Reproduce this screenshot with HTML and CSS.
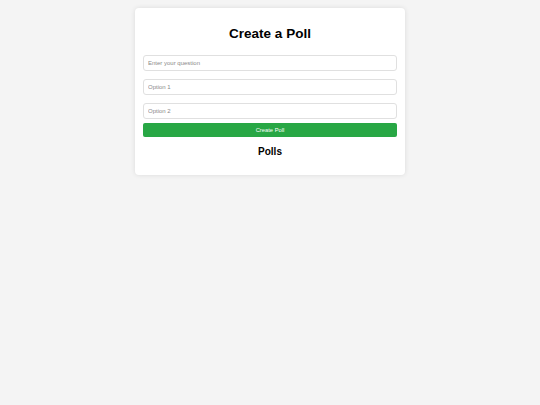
FILE: index.html
```html
<!DOCTYPE html>
<html lang="en">
<head>
<meta charset="utf-8">
<title>Create a Poll</title>
<link rel="stylesheet" href="styles.css">
</head>
<body>
<div class="container">
  <h1 class="title">Create a Poll</h1>
  <form class="poll-form">
    <input class="field" type="text" placeholder="Enter your question">
    <input class="field" type="text" placeholder="Option 1">
    <input class="field field-last" type="text" placeholder="Option 2">
    <button class="submit" type="button">Create Poll</button>
  </form>
  <h2 class="subtitle">Polls</h2>
  <div class="polls"></div>
</div>
</body>
</html>
```

FILE: styles.css
```css
html, body {
  margin: 0;
  padding: 0;
}
body {
  background: #f4f4f4;
  font-family: "Liberation Sans", Arial, sans-serif;
}
.container {
  width: 270px;
  box-sizing: border-box;
  margin: 8px auto;
  padding: 8px 8px 8px;
  background: #fff;
  border-radius: 4px;
  box-shadow: 0 0 5px rgba(0, 0, 0, 0.1);
}
.title {
  margin: 10px 0 13px;
  font-size: 13.5px;
  line-height: 16px;
  font-weight: bold;
  text-align: center;
  color: #000;
}
.poll-form {
  margin: 0;
}
.field {
  display: block;
  width: 100%;
  height: 16px;
  box-sizing: border-box;
  margin: 0 0 8px;
  padding: 0 4px;
  border: 1px solid #e0e0e0;
  border-radius: 3px;
  font-family: "Liberation Sans", Arial, sans-serif;
  font-size: 6px;
  color: #333;
  background: #fff;
  outline: none;
}
.field::placeholder {
  color: #8a8a8a;
}
.field-last {
  margin-bottom: 4px;
}
.submit {
  display: block;
  width: 100%;
  height: 14px;
  margin: 0;
  padding: 0;
  border: none;
  border-radius: 2px;
  background: #28a745;
  color: #fff;
  font-family: "Liberation Sans", Arial, sans-serif;
  font-size: 5.8px;
  cursor: pointer;
}
.subtitle {
  margin: 8.5px 0 9.5px;
  font-size: 10px;
  line-height: 12px;
  font-weight: bold;
  text-align: center;
  color: #000;
}
.polls {
  min-height: 0;
}
```
